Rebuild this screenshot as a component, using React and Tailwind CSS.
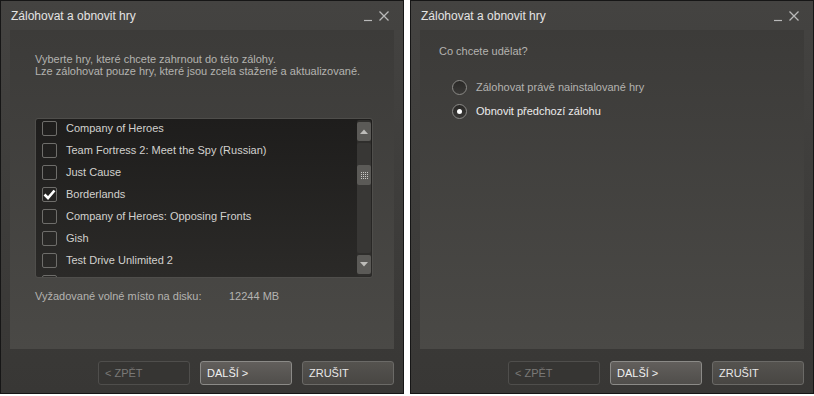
import React from "react";

const font = { fontFamily: '"Liberation Sans", Arial, sans-serif' };

function TitleBar() {
  return (
    <div className="flex h-[29px] items-center pl-[10px] pr-[9px]">
      <div className="flex-1 text-[12px] text-[#e4e4e4]">Zálohovat a obnovit hry</div>
      <svg width="30" height="12" viewBox="0 0 30 12" className="mt-[1px]">
        <line x1="0" y1="10.5" x2="8" y2="10.5" stroke="#b9b9b9" strokeWidth="1.2" />
        <path d="M15.5 1.5 L24.5 10.5 M24.5 1.5 L15.5 10.5" stroke="#b9b9b9" strokeWidth="1.3" />
      </svg>
    </div>
  );
}

function Button({ children, variant }) {
  const cls =
    variant === "disabled"
      ? "border-[#4f4e4c] bg-[#363533] text-[#7a7977]"
      : variant === "primary"
      ? "border-[#8b8a87] bg-gradient-to-b from-[#625f5c] to-[#504e4b] text-[#f0f0f0]"
      : "border-[#6b6a67] bg-gradient-to-b from-[#55534f] to-[#484643] text-[#e8e8e8]";
  return (
    <div className={`flex h-[24px] w-[92px] items-center rounded-[3px] border pl-[6px] text-[11px] ${cls}`}>
      {children}
    </div>
  );
}

function Buttons() {
  return (
    <div className="flex justify-end gap-[10px] pr-[9px] pt-[12px]">
      <Button variant="disabled">&lt; ZPĚT</Button>
      <Button variant="primary">DALŠÍ &gt;</Button>
      <Button>ZRUŠIT</Button>
    </div>
  );
}

function Checkbox({ checked }) {
  return (
    <div className="flex h-[15px] w-[15px] shrink-0 items-center justify-center rounded-[2px] border border-[#6e6d6a]">
      {checked && (
        <svg width="13" height="11" viewBox="0 0 13 11">
          <path d="M1.5 5.5 L5 9 L11.5 1.5" fill="none" stroke="#ffffff" strokeWidth="2.6" />
        </svg>
      )}
    </div>
  );
}

const games = [
  ["Company of Heroes", false],
  ["Team Fortress 2: Meet the Spy (Russian)", false],
  ["Just Cause", false],
  ["Borderlands", true],
  ["Company of Heroes: Opposing Fronts", false],
  ["Gish", false],
  ["Test Drive Unlimited 2", false],
  ["Tom Clancy's Splinter Cell", false],
];

function Scrollbar() {
  return (
    <div className="flex w-[14px] flex-col gap-[2px] rounded-[2px] bg-[#2f2e2c] py-[2px]">
      <div className="flex h-[19px] items-center justify-center rounded-[2px] bg-[#5b5a57]">
        <svg width="8" height="5" viewBox="0 0 8 5"><path d="M0 5 L4 0.5 L8 5 Z" fill="#bdbcb9" /></svg>
      </div>
      <div className="flex flex-1 flex-col rounded-[2px] bg-[#383735]">
        <div className="h-[22px]" />
        <div className="flex h-[20px] items-center justify-center rounded-[2px] bg-[#5b5a57]">
          <div className="grid grid-cols-4 gap-[1px]">
            {Array.from({ length: 16 }).map((_, i) => (
              <div key={i} className="h-[1px] w-[1px] bg-[#c9c8c5]" />
            ))}
          </div>
        </div>
      </div>
      <div className="flex h-[19px] items-center justify-center rounded-[2px] bg-[#5b5a57]">
        <svg width="8" height="5" viewBox="0 0 8 5"><path d="M0 0 L4 4.5 L8 0 Z" fill="#bdbcb9" /></svg>
      </div>
    </div>
  );
}

function LeftWindow() {
  return (
    <div className="flex h-[394px] w-[404px] flex-col border border-[#161616] bg-gradient-to-b from-[#444341] to-[#383735]">
      <TitleBar />
      <div className="mx-[9px] flex h-[319px] flex-col bg-gradient-to-b from-[#3c3b39] to-[#4a4946] pl-[25px] pt-[23px]">
        <div className="text-[11px] leading-[12px] text-[#b4b3b0]">
          <div>Vyberte hry, které chcete zahrnout do této zálohy.</div>
          <div>Lze zálohovat pouze hry, které jsou zcela stažené a aktualizované.</div>
        </div>
        <div className="mt-[41px] flex h-[160px] w-[338px] overflow-hidden rounded-[3px] border border-[#4f4e4b] bg-gradient-to-b from-[#1e1d1c] to-[#2b2a28] pr-[1px]">
          <div className="-mt-[2px] flex-1 overflow-hidden pl-[6px]">
            {games.map(([name, checked]) => (
              <div key={name} className="flex h-[22px] items-center gap-[9px]">
                <Checkbox checked={checked} />
                <div className="text-[11px] text-[#d2d1ce]">{name}</div>
              </div>
            ))}
          </div>
          <div className="flex py-[1px]">
            <Scrollbar />
          </div>
        </div>
        <div className="mt-[10px] flex text-[11px] text-[#b4b3b0]">
          <div className="w-[194px]">Vyžadované volné místo na disku:</div>
          <div>12244 MB</div>
        </div>
      </div>
      <Buttons />
    </div>
  );
}

function Radio({ checked, label }) {
  return (
    <div className="flex h-[24px] items-center gap-[9px]">
      <div className="flex h-[15px] w-[15px] items-center justify-center rounded-full border border-[#8a8986] bg-gradient-to-b from-[#2a2927] to-[#3a3937]">
        {checked && <div className="h-[5px] w-[5px] rounded-full bg-white" />}
      </div>
      <div className={`text-[11px] ${checked ? "text-[#ececec]" : "text-[#b4b3b0]"}`}>{label}</div>
    </div>
  );
}

function RightWindow() {
  return (
    <div className="flex h-[394px] w-[404px] flex-col border border-[#161616] bg-gradient-to-b from-[#444341] to-[#383735]">
      <TitleBar />
      <div className="mx-[9px] flex h-[319px] flex-col bg-gradient-to-b from-[#3c3b39] to-[#4a4946] pt-[13px]">
        <div className="pl-[19px] text-[11px] text-[#b4b3b0]">Co chcete udělat?</div>
        <div className="mt-[16px] flex flex-col pl-[32px]">
          <Radio label="Zálohovat právě nainstalované hry" />
          <Radio checked label="Obnovit předchozí zálohu" />
        </div>
      </div>
      <Buttons />
    </div>
  );
}

export default function App() {
  return (
    <div className="flex h-[396px] w-[814px] gap-[6px] bg-white" style={font}>
      <LeftWindow />
      <RightWindow />
    </div>
  );
}
